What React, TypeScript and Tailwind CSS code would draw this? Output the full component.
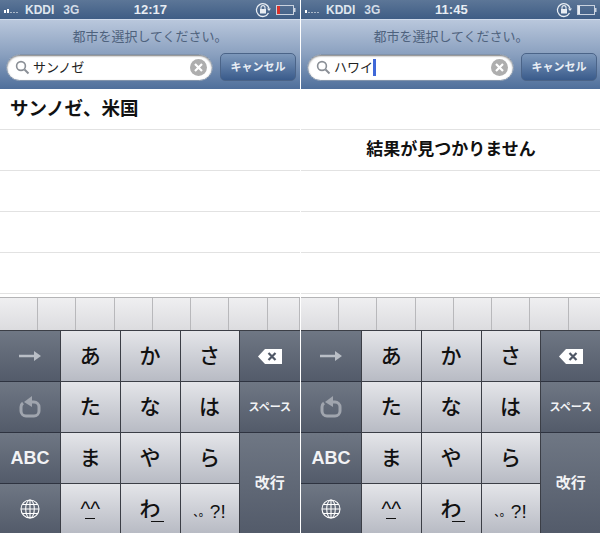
import React from 'react';

const font = { fontFamily: '"Liberation Sans", "Noto Sans CJK JP", sans-serif' };

function SideKey({ children, className = '' }: { children?: React.ReactNode; className?: string }) {
  return (
    <div className={`flex items-center justify-center bg-gradient-to-b from-[#6f7784] to-[#535b6a] border-b border-[#2e3340] text-[#f2f3f5] ${className}`}>
      {children}
    </div>
  );
}

function Key({ children, className = '' }: { children?: React.ReactNode; className?: string }) {
  return (
    <div className={`flex items-center justify-center bg-gradient-to-b from-[#e4e5e9] to-[#b8bbc4] border-l border-b border-[#3b3e46] text-[21px] font-medium text-[#111] ${className}`}>
      {children}
    </div>
  );
}

function Battery({ low }: { low: boolean }) {
  return (
    <svg width="20" height="10" viewBox="0 0 20 10">
      <rect x="0.5" y="0.5" width="17" height="9" fill="none" stroke="#c9d2df" />
      <rect x="18" y="3" width="1.5" height="4" fill="#c9d2df" />
      <rect x="1" y="1" width={low ? 3 : 2} height="8" fill={low ? '#d8322c' : '#e8edf3'} />
    </svg>
  );
}

function Lock() {
  return (
    <svg width="16" height="16" viewBox="0 0 16 16" fill="none">
      <path d="M13.5 11A6.4 6.4 0 1 1 14 6.5" stroke="#e8edf3" strokeWidth="1.3" />
      <path d="M12 6.5h4L14 9z" fill="#e8edf3" />
      <rect x="5" y="7" width="6" height="4.5" fill="#e8edf3" />
      <path d="M6 7V5.6a2 2 0 0 1 4 0V7" stroke="#e8edf3" strokeWidth="1.1" />
    </svg>
  );
}

function Phone({ time, query, low, found }: { time: string; query: string; low: boolean; found: boolean }) {
  return (
    <div className="flex flex-col w-[300px] h-[533px] bg-white overflow-hidden" style={font}>
      {/* status bar */}
      <div className="flex items-center h-[19px] pl-1 pr-1 bg-gradient-to-b from-[#5c7697] to-[#3f5d85] text-[#dfe6ee] text-[11px] font-bold">
        <div className="flex items-end gap-[1px] w-[20px] h-[6px]">
          <span className="w-[2px] h-[3px] bg-white" />
          <span className={`w-[2px] ${low ? 'h-[4px] bg-white' : 'h-[1px] bg-[#aab8c9]'}`} />
          <span className="w-[2px] h-[1px] bg-[#aab8c9]" />
          <span className="w-[2px] h-[1px] bg-[#aab8c9]" />
          <span className="w-[2px] h-[1px] bg-[#aab8c9]" />
        </div>
        <span className="ml-[1px] text-[12px]">KDDI</span>
        <span className="ml-[9px] text-[12px] text-[#d3dce7]">3G</span>
        <span className="ml-[51px] w-[40px] text-center text-[13px] font-bold text-[#e8edf3]">{time}</span>
        <div className="ml-auto flex items-center gap-[5px]">
          <Lock />
          <Battery low={low} />
        </div>
      </div>

      {/* search header */}
      <div className="flex flex-col h-[70px] bg-gradient-to-b from-[#b9c7dc] via-[#8aa0bf] to-[#4f6f9b] border-t border-[#cfdaea]">
        <div className="h-[33px] flex items-center justify-center text-[13px] text-[#4e627d]">都市を選択してください。</div>
        <div className="flex items-start pl-[6px] pr-1">
          <div className="flex items-center w-[207px] h-[27px] mt-px rounded-full bg-white border border-[#8193ab] shadow-[inset_0_1px_2px_#777] pl-2 pr-[5px]">
            <svg width="15" height="15" viewBox="0 0 15 15" fill="none" stroke="#8a8f96" strokeWidth="1.6">
              <circle cx="6" cy="6" r="4.4" />
              <path d="M9.5 9.5l4 4" strokeWidth="2" />
            </svg>
            <span className="ml-[3px] text-[13px] text-[#222]">{query}</span>
            {!found && <span className="w-[3px] h-[17px] bg-[#3f68d8]" />}
            <span className="ml-auto flex items-center justify-center w-[17px] h-[17px] rounded-full bg-[#aeaeae]">
              <svg width="9" height="9" viewBox="0 0 9 9" stroke="#fff" strokeWidth="2.2"><path d="M1 1l7 7M8 1l-7 7" /></svg>
            </span>
          </div>
          <div className="ml-[7px] flex items-center justify-center w-[76px] h-[28px] rounded-[5px] bg-gradient-to-b from-[#7d98bb] to-[#3a5b8b] border border-[#4b6488] text-[#e9eef5] text-[11px] font-bold">キャンセル</div>
        </div>
      </div>

      {/* results */}
      <div className="flex flex-col h-[208px] bg-white">
        {[0, 1, 2, 3, 4].map(i => (
          <div key={i} className={`flex items-center shrink-0 h-[41px] border-b border-[#e2e2e2] font-bold text-[#111] ${i === 1 && !found ? 'justify-center text-[17px]' : 'pl-[10px] text-[18.5px]'}`}>
            {i === 0 && found && 'サンノゼ、米国'}
            {i === 1 && !found && '結果が見つかりません'}
          </div>
        ))}
      </div>

      {/* candidate bar */}
      <div className="grid grid-cols-[38px_repeat(6,38.3px)_1fr] h-[33px] border-t border-[#b4b4b6] bg-gradient-to-b from-[#efeff1] to-[#dcdcdf]">
        {[0, 1, 2, 3, 4, 5, 6, 7].map(i => (
          <div key={i} className="border-r border-[#b8b8bb]" />
        ))}
      </div>

      {/* keyboard */}
      <div className="grid flex-1 grid-cols-[60px_59.5px_60px_59px_61.5px] grid-rows-[51px_51px_51px_1fr] border-t border-[#3b3e46]">
        <SideKey>
          <svg width="22" height="10" viewBox="0 0 22 10" fill="#b9bec6"><path d="M0 3.7h15V0l7 5-7 5V6.3H0z" /></svg>
        </SideKey>
        <Key>あ</Key>
        <Key>か</Key>
        <Key>さ</Key>
        <SideKey className="border-l border-l-[#3b3e46]">
          <svg width="24" height="15" viewBox="0 0 24 15">
            <path d="M7 0h17v15H7L0 7.5z" fill="#fff" />
            <path d="M10.5 4l7 7M17.5 4l-7 7" stroke="#4f5766" strokeWidth="2.2" />
          </svg>
        </SideKey>

        <SideKey>
          <svg width="22" height="22" viewBox="0 0 22 22" fill="none" stroke="#a0a5ae" strokeWidth="3">
            <path d="M11 6h4a5 5 0 0 1 5 5v4a5 5 0 0 1-5 5H7a5 5 0 0 1-5-5v-4a5 5 0 0 1 2-4" />
            <path d="M13 0v11L5 6z" fill="#a0a5ae" stroke="none" />
          </svg>
        </SideKey>
        <Key>た</Key>
        <Key>な</Key>
        <Key>は</Key>
        <SideKey className="border-l border-l-[#3b3e46] text-[11px] font-bold">スペース</SideKey>

        <SideKey className="text-[18px] font-bold">ABC</SideKey>
        <Key>ま</Key>
        <Key>や</Key>
        <Key>ら</Key>
        <SideKey className="row-span-2 border-l border-l-[#3b3e46] border-b-0 text-[15px] font-bold">改行</SideKey>

        <SideKey className="border-b-0">
          <svg width="20" height="20" viewBox="0 0 20 20" fill="none" stroke="#fff" strokeWidth="1.1">
            <circle cx="10" cy="10" r="9" />
            <ellipse cx="10" cy="10" rx="4.3" ry="9" />
            <path d="M10 1v18M1 10h18M2.4 5.5h15.2M2.4 14.5h15.2" />
          </svg>
        </SideKey>
        <Key className="border-b-0 text-[17px]"><span className="relative">^^<span className="absolute left-[5px] right-[5px] bottom-[5px] h-[1.5px] bg-[#111]" /></span></Key>
        <Key className="border-b-0"><span className="relative">わ<span className="absolute left-[11px] -right-[3px] bottom-[2px] h-[1.5px] bg-[#111]" /></span></Key>
        <Key className="border-b-0 items-baseline pt-[8px]"><span className="text-[11px]">、。</span><span className="text-[19px]">?!</span></Key>
      </div>
    </div>
  );
}

export default function App() {
  return (
    <div className="flex w-[600px] h-[533px] bg-white overflow-hidden">
      <Phone time="12:17" query="サンノゼ" low found />
      <div className="w-px shrink-0 bg-white" />
      <div className="w-[299px] overflow-hidden shrink-0">
        <Phone time="11:45" query="ハワイ" low={false} found={false} />
      </div>
    </div>
  );
}
